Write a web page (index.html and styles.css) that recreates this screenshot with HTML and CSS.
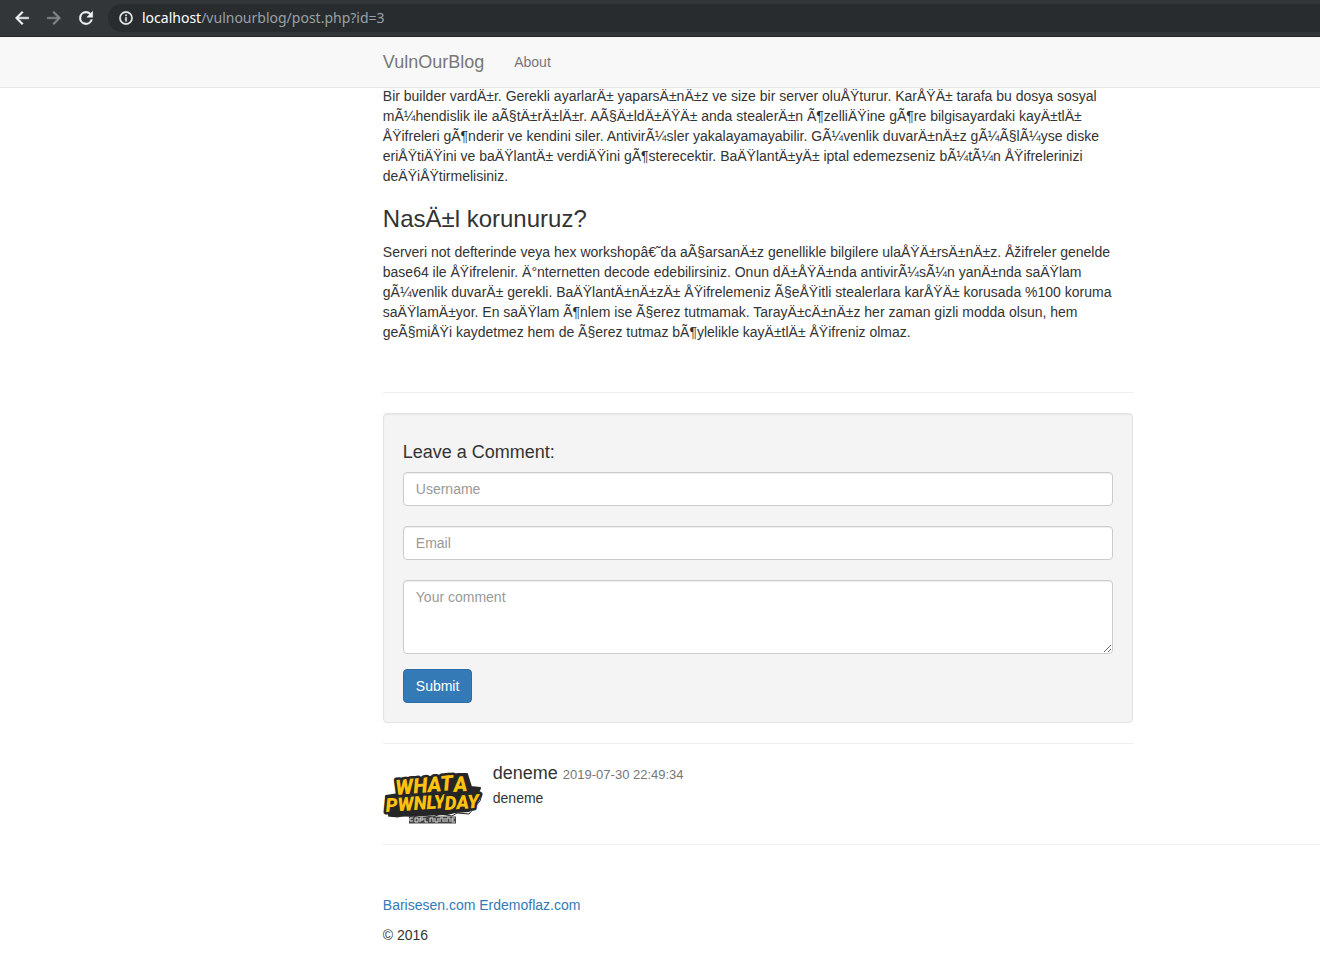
FILE: index.html
```html
<!DOCTYPE html>
<html lang="tr">
<head>
<meta charset="utf-8">
<meta name="viewport" content="width=device-width, initial-scale=1">
<title>VulnOurBlog</title>
<link rel="stylesheet" href="styles.css">
</head>
<body>
<header class="top">
  <div class="browser-bar">
    <button class="tool" type="button" aria-label="Back">
      <svg viewBox="0 0 24 24"><path d="M20 11H7.83l5.59-5.59L12 4l-8 8 8 8 1.41-1.41L7.83 13H20v-2z"/></svg>
    </button>
    <button class="tool tool-off" type="button" aria-label="Forward">
      <svg viewBox="0 0 24 24"><path d="M12 4l-1.41 1.41L16.17 11H4v2h12.17l-5.58 5.59L12 20l8-8z"/></svg>
    </button>
    <button class="tool" type="button" aria-label="Reload">
      <svg viewBox="0 0 24 24"><path d="M17.65 6.35A7.96 7.96 0 0 0 12 4a8 8 0 1 0 7.73 10h-2.08A6 6 0 1 1 12 6c1.66 0 3.14.69 4.22 1.78L13 11h7V4l-2.35 2.35z"/></svg>
    </button>
    <div class="address">
      <svg viewBox="0 0 24 24"><path d="M11 17h2v-6h-2v6zm0-8h2V7h-2v2zm1-7a10 10 0 1 0 0 20 10 10 0 0 0 0-20zm0 18a8 8 0 1 1 0-16 8 8 0 0 1 0 16z"/></svg>
      <span class="url"><span class="host">localhost</span>/vulnourblog/post.php?id=3</span>
    </div>
  </div>
  <nav class="navbar">
    <a class="brand" href="#">VulnOurBlog</a>
    <a class="nav-link" href="#">About</a>
  </nav>
</header>

<main class="container">
  <article class="column">
    <p>Bir builder vardÄ±r. Gerekli ayarlarÄ± yaparsÄ±nÄ±z ve size bir server oluÅŸturur. KarÅŸÄ± tarafa bu dosya sosyal mÃ¼hendislik ile aÃ§tÄ±rÄ±lÄ±r. AÃ§Ä±ldÄ±ÄŸÄ± anda stealerÄ±n Ã¶zelliÄŸine gÃ¶re bilgisayardaki kayÄ±tlÄ± ÅŸifreleri gÃ¶nderir ve kendini siler. AntivirÃ¼sler yakalayamayabilir. GÃ¼venlik duvarÄ±nÄ±z gÃ¼Ã§lÃ¼yse diske eriÅŸtiÄŸini ve baÄŸlantÄ± verdiÄŸini gÃ¶sterecektir. BaÄŸlantÄ±yÄ± iptal edemezseniz bÃ¼tÃ¼n ÅŸifrelerinizi deÄŸiÅŸtirmelisiniz.</p>
    <h3>NasÄ±l korunuruz?</h3>
    <p>Serveri not defterinde veya hex workshopâ€˜da aÃ§arsanÄ±z genellikle bilgilere ulaÅŸÄ±rsÄ±nÄ±z. Åžifreler genelde base64 ile ÅŸifrelenir. Ä°nternetten decode edebilirsiniz. Onun dÄ±ÅŸÄ±nda antivirÃ¼sÃ¼n yanÄ±nda saÄŸlam gÃ¼venlik duvarÄ± gerekli. BaÄŸlantÄ±nÄ±zÄ± ÅŸifrelemeniz Ã§eÅŸitli stealerlara karÅŸÄ± korusada %100 koruma saÄŸlamÄ±yor. En saÄŸlam Ã¶nlem ise Ã§erez tutmamak. TarayÄ±cÄ±nÄ±z her zaman gizli modda olsun, hem geÃ§miÅŸi kaydetmez hem de Ã§erez tutmaz bÃ¶ylelikle kayÄ±tlÄ± ÅŸifreniz olmaz.</p>
  </article>

  <section class="column comments">
    <hr>
    <form class="well">
      <h4>Leave a Comment:</h4>
      <input class="field" type="text" placeholder="Username" aria-label="Username">
      <input class="field" type="email" placeholder="Email" aria-label="Email">
      <textarea class="field message" rows="3" placeholder="Your comment" aria-label="Your comment"></textarea>
      <button class="submit" type="submit">Submit</button>
    </form>
    <hr>
    <div class="media">
      <svg class="avatar" viewBox="0 0 100 60" role="img" aria-label="What a pwnly day">
        <path class="logo-back" d="M15 16l11-1 30-3 14-1 5-1h9l4 13 9 1-5 14-6 9-14 1-8 2-52 2-6-1-3-19 13-2z"/>
        <path class="logo-edge" d="M5 52l10 1 6-2 9 2 8-2 12 2 7-3 12 2 5-3 12 1 11-13 2-7"/>
        <g class="logo-text">
          <text x="13" y="31" transform="rotate(-5 13 31)">WHAT</text>
          <text x="71" y="28" transform="rotate(-5 71 28)">A</text>
          <text class="row-two" x="3" y="48" transform="rotate(-4 3 48)">PWNLY</text>
          <text class="row-two" x="62" y="46" transform="rotate(-4 62 46)">DAY</text>
        </g>
        <path class="logo-sub" d="M26 56h47"/>
        <path class="logo-marks" d="M30 54h-3v3h3m2-3v4h3v-4h-3m5 4v-4h3v2h-3m5-2v4h3m2-4v4m0-4h3v4m2-4v4h3v-4m2 4v-4h3v4m2-4v4m2-4v4m0-4h3v4m5-4h-3v4h3m-3-2h2"/>
      </svg>
      <div class="media-body">
        <h4>deneme <small>2019-07-30 22:49:34</small></h4>
        deneme
      </div>
    </div>
  </section>

  <hr>
  <footer>
    <p><a href="#">Barisesen.com</a> <a href="#">Erdemoflaz.com</a></p>
    <p>© 2016</p>
  </footer>
</main>
</body>
</html>
```

FILE: styles.css
```css
* { box-sizing: border-box; }

:root { --gutter: 29%; }

body {
  margin: 0;
  padding-top: 86px;
  background: #fff;
  color: #333;
  font: 14px/20px "Liberation Sans", Arial, sans-serif;
}

a { color: #337ab7; text-decoration: none; }
p { margin: 0 0 10px; }
h3, h4 { margin: 0; font-weight: 400; }
h3 { margin: 20px 0 10px; font-size: 24px; line-height: 26px; }
h4 { font-size: 18px; line-height: 20px; }
hr { margin: 20px 0; border: 0; border-top: 1px solid #eee; }

.top { position: fixed; top: 0; left: 0; right: 0; z-index: 1; }

.browser-bar {
  display: flex;
  align-items: center;
  height: 37px;
  padding: 0 0 1px 6px;
  background: #323639;
  border-bottom: 1px solid #222426;
}
.tool {
  display: flex;
  align-items: center;
  justify-content: center;
  width: 32px;
  height: 32px;
  padding: 0;
  border: 0;
  background: none;
}
.tool svg { width: 20px; height: 20px; fill: #f1f3f4; stroke: #f1f3f4; stroke-width: 0.6; }
.tool-off svg { fill: #85888a; stroke: #85888a; }
.address {
  display: flex;
  flex: 1;
  align-items: center;
  gap: 8px;
  height: 28px;
  margin-left: 6px;
  padding-left: 10px;
  border-radius: 14px 0 0 14px;
  background: #282c2f;
  color: #9aa0a6;
  font-family: "Noto Sans", sans-serif;
}
.address svg { width: 16px; height: 16px; fill: #e8eaed; stroke: #e8eaed; stroke-width: 0.6; }
.host { color: #fff; }

.navbar {
  display: flex;
  align-items: center;
  gap: 30px;
  height: 51px;
  padding-left: var(--gutter);
  background: #f8f8f8;
  border-bottom: 1px solid #e7e7e7;
}
.navbar a { color: #777; }
.navbar .brand { font-size: 18px; }

.container { padding-left: var(--gutter); }
.column { max-width: 750px; }
.comments { padding-top: 20px; }

.well {
  padding: 28px 19px 19px;
  border: 1px solid #e3e3e3;
  border-radius: 4px;
  background: #f4f4f4;
  box-shadow: inset 0 1px 1px rgba(0, 0, 0, 0.05);
}
.well h4 { margin-bottom: 10px; }
.field {
  display: block;
  width: 100%;
  height: 34px;
  margin: 0 0 20px;
  padding: 6px 12px;
  border: 1px solid #ccc;
  border-radius: 4px;
  background: #fff;
  box-shadow: inset 0 1px 1px rgba(0, 0, 0, 0.075);
  color: #555;
  font: inherit;
}
.field::placeholder { color: #999; }
.message { height: 74px; margin-bottom: 15px; resize: vertical; }
.submit {
  display: block;
  padding: 6px 12px;
  border: 1px solid #2e6da4;
  border-radius: 4px;
  background: #337ab7;
  color: #fff;
  font: inherit;
}

.media { display: flex; gap: 10px; }
.avatar { width: 100px; height: 60px; }
.media-body h4 { margin-bottom: 5px; line-height: 19px; }
.media-body small { color: #777; font-size: 13px; line-height: 1; }

.logo-back { fill: #262626; stroke: #262626; stroke-width: 2; stroke-linejoin: round; }
.logo-edge { fill: none; stroke: #262626; stroke-width: 1; }
.logo-text {
  fill: #fdc20e;
  stroke: #262626;
  stroke-width: 5;
  stroke-linejoin: round;
  paint-order: stroke;
  font: italic 900 21px Roboto, sans-serif;
}
.row-two { font-size: 19px; }
.logo-sub { stroke: #444; stroke-width: 7; }
.logo-marks { fill: none; stroke: #ddd; stroke-width: 1; }

footer { margin-top: 50px; }
```
